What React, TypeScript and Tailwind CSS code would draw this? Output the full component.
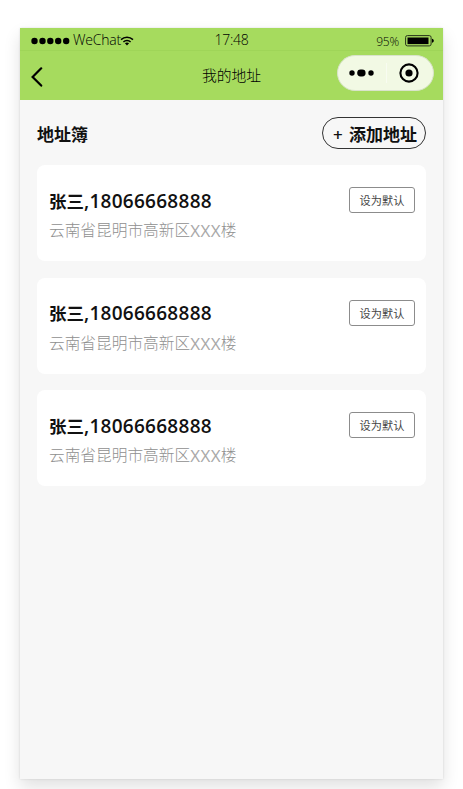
import { useState } from "react";

type Address = { id: number; name: string; phone: string; region: string; building: string; suffix: string };

const ADDRESSES: Address[] = [1, 2, 3].map((id) => ({
  id,
  name: "张三",
  phone: "18066668888",
  region: "云南省昆明市高新区",
  building: "XXX",
  suffix: "楼",
}));

function StatusBar() {
  return (
    <div className="flex h-[23px] items-center justify-between border-b border-[#9fd558] pt-[2px] pr-[8px] pl-[11px]">
      <div className="flex w-[183px] items-center">
        <svg width="40" height="8" viewBox="0 0 40 8" className="mt-px shrink-0">
          {[3.5, 11.5, 19.3, 27.2, 35.2].map((cx) => (
            <circle key={cx} cx={cx} cy="4" r="3.2" />
          ))}
        </svg>
        <span className="ml-[2px] text-[14px] leading-[20px] font-light tracking-[-0.2px]">WeChat</span>
        <svg width="14" height="10" viewBox="0 0 14 10" fill="none" stroke="#000" strokeWidth="1.5" className="-ml-px mt-px">
          <path d="M1 3.6C4.4.3 9.6.3 13 3.6" />
          <path d="M3.4 6C5.4 4 8.6 4 10.6 6" />
          <path d="M4.9 7.2C6.1 6.2 7.9 6.2 9.1 7.2L7 9.4Z" fill="#000" stroke="none" />
        </svg>
      </div>
      <span className="mr-[3px] text-[14px] leading-[20px] font-light tracking-[-0.3px]">17:48</span>
      <div className="flex w-[183px] items-center justify-end gap-[6px]">
        <span className="pt-[3px] text-[12px] leading-[18px] font-light tracking-[-0.2px]">95%</span>
        <svg width="30" height="12" viewBox="0 0 30 12" className="mt-px">
          <rect x="0.6" y="0.6" width="25.5" height="10.3" rx="1.8" fill="none" stroke="#26321a" />
          <rect x="2.5" y="2.5" width="21" height="6.6" />
          <path d="M27 3.8c1.1.2 1.8 1 1.8 2s-.7 1.8-1.8 2z" />
        </svg>
      </div>
    </div>
  );
}

function NavBar() {
  return (
    <div className="flex h-[49px] items-start justify-between pr-[9px] pl-[11px]">
      <div className="w-[97px] pt-[16px]">
        <svg width="12" height="20" viewBox="0 0 12 20" fill="none" stroke="#000" strokeWidth="2.2" strokeLinecap="round">
          <path d="M10.2 1.3L1.6 9.9l8.6 8.7" />
        </svg>
      </div>
      <h1 className="mr-[2px] pt-[14px] text-[14.8px] leading-[20px] font-light">我的地址</h1>
      <div className="mt-[4px] flex h-[36px] w-[97px] items-center justify-between rounded-full border border-[#d9e3cb] bg-[#f2f9e4] pr-[14px] pl-[11px]">
        <svg width="26" height="8" viewBox="0 0 26 8">
          <circle cx="3" cy="4" r="2.7" />
          <rect x="8.2" y="0.5" width="8.4" height="7" rx="3.4" />
          <circle cx="22" cy="4" r="2.7" />
        </svg>
        <span className="h-[20px] w-px bg-[#f8fcf1]" />
        <svg width="20" height="20" viewBox="0 0 20 20">
          <circle cx="10" cy="10" r="8.6" fill="none" stroke="#000" strokeWidth="2.1" />
          <circle cx="10" cy="10" r="3.6" />
        </svg>
      </div>
    </div>
  );
}

function AddressCard({ item, onDefault }: { item: Address; onDefault: () => void }) {
  return (
    <li className="flex h-[96px] items-start justify-between rounded-[8px] bg-white pr-[11px] pl-[12px]">
      <div className="pt-[22px]">
        <p className="flex h-[28px] items-center font-semibold whitespace-nowrap text-[#111]">
          <span className="text-[17.5px]">{item.name}</span>
          <span className="text-[19px] tracking-[0.27px]">,{item.phone}</span>
        </p>
        <p className="mt-[2px] flex h-[28px] items-center text-[15.7px] font-light whitespace-nowrap text-[#8f8f8f]">
          <span>{item.region}</span>
          <span className="text-[17px] font-normal tracking-[0.4px] text-[#a8a8a8]">{item.building}</span>
          <span>{item.suffix}</span>
        </p>
      </div>
      <button
        type="button"
        onClick={onDefault}
        className="mt-[22px] h-[26px] w-[66px] rounded-[3px] border border-[#8c8c8c] pt-px text-[11.2px] leading-[23px] text-[#444]"
      >
        设为默认
      </button>
    </li>
  );
}

export default function App() {
  const [, setDefaultId] = useState<number | null>(null);

  return (
    <div className="h-[789px] w-[463px] overflow-hidden bg-white px-[20px] pt-[28px] font-['Open_Sans','Noto_Sans_CJK_SC',sans-serif] text-black">
      <div className="h-[751px] w-[423px] bg-[#f7f7f7] shadow-[0_8px_16px_rgba(0,0,0,0.12),0_0_2px_rgba(0,0,0,0.12)]">
        <header className="bg-[#a6db5e]">
          <StatusBar />
          <NavBar />
        </header>

        <main className="px-[17px] pt-[17px]">
          <div className="flex h-[32px] items-center justify-between">
            <h2 className="pt-[3px] text-[17px] font-bold text-[#111]">地址簿</h2>
            <button
              type="button"
              className="flex h-[32px] w-[104px] items-center justify-between rounded-full border border-[#333] pt-[3px] pr-[8px] pl-[10px] text-[17px] font-bold text-[#111]"
            >
              <span className="font-semibold">+</span>
              <span>添加地址</span>
            </button>
          </div>

          <ul className="mt-[16px] space-y-[16.5px]">
            {ADDRESSES.map((item) => (
              <AddressCard key={item.id} item={item} onDefault={() => setDefaultId(item.id)} />
            ))}
          </ul>
        </main>
      </div>
    </div>
  );
}
